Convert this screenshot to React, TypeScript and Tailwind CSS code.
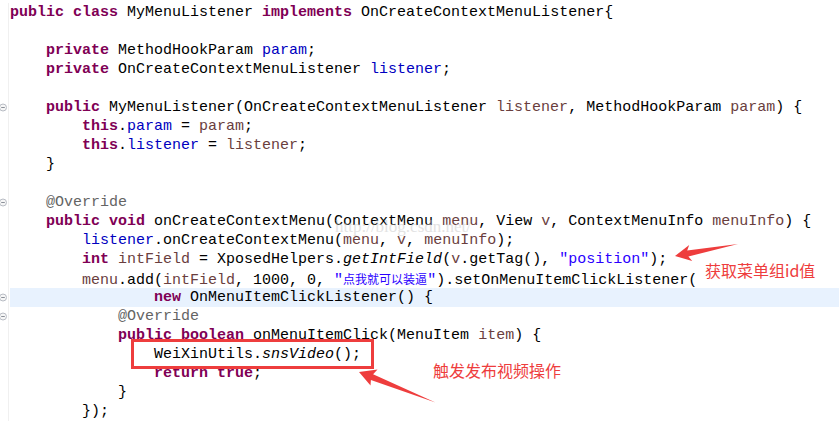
type Tok = [string, string?];

const K = "font-bold text-[#7f0055]";
const F = "text-[#0000c0]";
const P = "text-[#6a3e3e]";
const S = "text-[#2a00ff]";
const A = "text-[#646464]";
const I = "italic";
const CJK = "text-[#2a00ff] text-[12px] font-['Noto_Sans_CJK_SC',sans-serif]";

const lines: Tok[][] = [
  [["public", K], [" "], ["class", K], [" MyMenuListener "], ["implements", K], [" OnCreateContextMenuListener{"]],
  [],
  [["    "], ["private", K], [" MethodHookParam "], ["param", F], [";"]],
  [["    "], ["private", K], [" OnCreateContextMenuListener "], ["listener", F], [";"]],
  [],
  [["    "], ["public", K], [" MyMenuListener(OnCreateContextMenuListener "], ["listener", P], [", MethodHookParam "], ["param", P], [") {"]],
  [["        "], ["this", K], ["."], ["param", F], [" = "], ["param", P], [";"]],
  [["        "], ["this", K], ["."], ["listener", F], [" = "], ["listener", P], [";"]],
  [["    }"]],
  [],
  [["    "], ["@Override", A]],
  [["    "], ["public", K], [" "], ["void", K], [" onCreateContextMenu(ContextMenu "], ["menu", P], [", View "], ["v", P], [", ContextMenuInfo "], ["menuInfo", P], [") {"]],
  [["        "], ["listener", F], [".onCreateContextMenu("], ["menu", P], [", "], ["v", P], [", "], ["menuInfo", P], [");"]],
  [["        "], ["int", K], [" "], ["intField", P], [" = XposedHelpers."], ["getIntField", I], ["("], ["v", P], [".getTag(), "], ['"position"', S], [");"]],
  [["        "], ["menu", P], [".add("], ["intField", P], [", 1000, 0, "], ['"', S], ["点我就可以装逼", CJK], ['"', S], [").setOnMenuItemClickListener("]],
  [["                "], ["new", K], [" OnMenuItemClickListener() {"]],
  [["            "], ["@Override", A]],
  [["            "], ["public", K], [" "], ["boolean", K], [" onMenuItemClick(MenuItem "], ["item", P], [") {"]],
  [["                WeiXinUtils."], ["snsVideo", I], ["();"]],
  [["                "], ["return", K], [" "], ["true", K], [";"]],
  [["            }"]],
  [["        });"]],
];

const folds = [5, 10, 15, 16];
const current = 15;

function FoldMark() {
  return (
    <svg width="9" height="19" viewBox="0 0 9 19" className="block">
      <circle cx="3" cy="9.5" r="3.5" fill="#f6f6f6" stroke="#b8bcc4" strokeWidth="1" />
      <line x1="1.2" y1="9.5" x2="4.8" y2="9.5" stroke="#8a8f98" strokeWidth="1" />
    </svg>
  );
}

export default function App() {
  return (
    <div className="relative w-[839px] h-[426px] overflow-hidden bg-white">
      <div className="flex flex-col pt-[3px] font-['Liberation_Mono',monospace] text-[15px] leading-[19px] text-black">
        {lines.map((line, i) => (
          <div key={i} className="flex h-[19px]">
            <div className="w-[9px] shrink-0 border-r border-[#f0f0f0]">{folds.includes(i) && <FoldMark />}</div>
            <div className={`ml-[1px] flex-1 pl-0 whitespace-pre ${i === current ? "bg-[#e8f2fe]" : ""}`}>
              {line.map(([t, c], j) => (
                <span key={j} className={c}>
                  {t}
                </span>
              ))}
            </div>
          </div>
        ))}
      </div>

      {/* watermark */}
      <span className="absolute left-[335px] top-[218px] font-['Liberation_Serif',serif] text-[17px] leading-[17px] text-[#c8c8c8] opacity-50 whitespace-nowrap">
        http://blog.csdn.net/
      </span>

      {/* annotations */}
      <div className="absolute left-[131px] top-[339px] w-[243px] h-[30px] border-[3px] border-[#ee3d3d]" />
      <svg className="absolute inset-0 pointer-events-none" width="839" height="426">
        <polygon
          fill="#ee3d3d"
          points="675,256 689.2,245.1 687.2,250.6 738,244 688.4,256.5 692.2,260.9"
        />
        <polygon
          fill="#ee3d3d"
          points="359,372 377.5,369.5 373.1,374.3 435.5,402.5 370.9,379.9 370.5,385.5"
        />
      </svg>
      <span className="absolute left-[705px] top-[261px] font-['Noto_Sans_CJK_SC',sans-serif] text-[16px] leading-[18px] text-[#ee3d3d] whitespace-nowrap">
        获取菜单组id值
      </span>
      <span className="absolute left-[433px] top-[361px] font-['Noto_Sans_CJK_SC',sans-serif] text-[16px] leading-[18px] text-[#ee3d3d] whitespace-nowrap">
        触发发布视频操作
      </span>
    </div>
  );
}
